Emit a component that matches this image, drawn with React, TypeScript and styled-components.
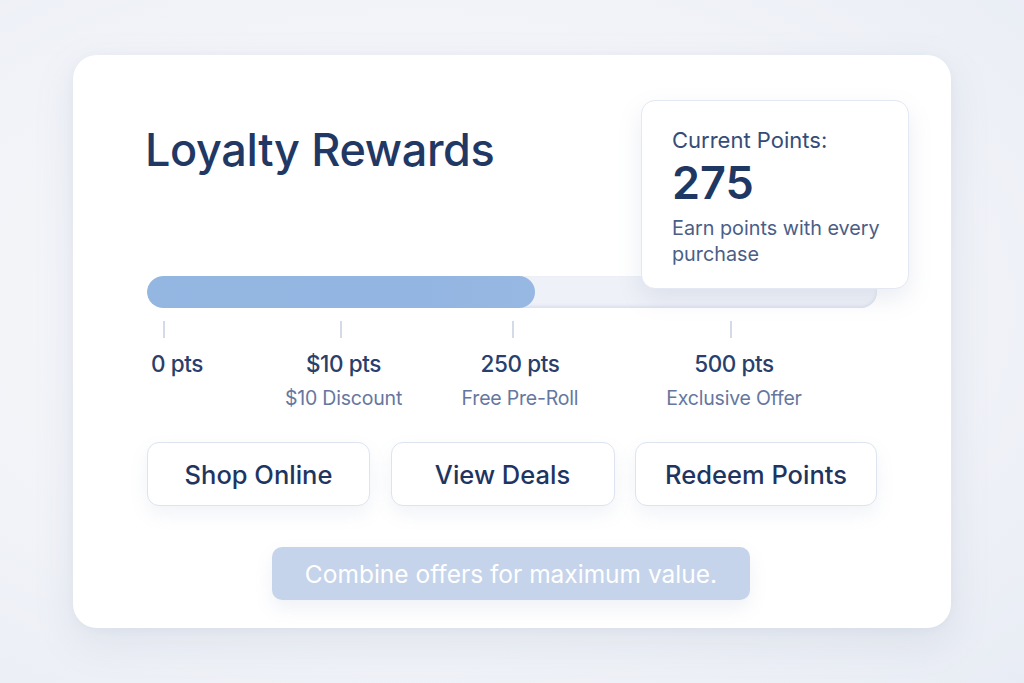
import { FC } from 'react'
import styled, { createGlobalStyle } from 'styled-components'

const GlobalStyle = createGlobalStyle`
  html, body {
    margin: 0;
    padding: 0;
  }
  body {
    font-family: Inter, "Noto Sans", "Liberation Sans", sans-serif;
    background: #f1f3f8;
  }
`

interface IMilestone {
  points: string
  reward?: string
  first?: boolean
  tickShift: number
}

const milestones: IMilestone[] = [
  { points: '0 pts', first: true, tickShift: 12 },
  { points: '$10 pts', reward: '$10 Discount', tickShift: -6 },
  { points: '250 pts', reward: 'Free Pre-Roll', tickShift: -14 },
  { points: '500 pts', reward: 'Exclusive Offer', tickShift: -6 },
]

const actions = ['Shop Online', 'View Deals', 'Redeem Points']

const progress = 388 / 730

const App: FC = () => {
  return (
    <>
      <GlobalStyle />
      <Page>
        <Card>
          <Title>Loyalty Rewards</Title>

          <PointsCard>
            <PointsLabel>Current Points:</PointsLabel>
            <PointsValue>275</PointsValue>
            <PointsHint>Earn points with every purchase</PointsHint>
          </PointsCard>

          <ProgressTrack>
            <ProgressFill style={{ width: `${progress * 100}%` }} />
          </ProgressTrack>

          <Milestones>
            {milestones.map((m) => (
              <Milestone key={m.points} $first={m.first}>
                <Tick $shift={m.tickShift} />
                <MilestonePoints>{m.points}</MilestonePoints>
                {m.reward && <MilestoneReward>{m.reward}</MilestoneReward>}
              </Milestone>
            ))}
          </Milestones>

          <Actions>
            {actions.map((a) => (
              <ActionButton key={a}>{a}</ActionButton>
            ))}
          </Actions>

          <TipWrap>
            <Tip>Combine offers for maximum value.</Tip>
          </TipWrap>
        </Card>
      </Page>
    </>
  )
}

export default App

const Page = styled.div`
  width: 1024px;
  height: 683px;
  box-sizing: border-box;
  padding: 55px 73px;
  background: radial-gradient(
    ellipse at 40% 45%,
    #f7f8fb 0%,
    #f1f3f8 60%,
    #e8ecf4 100%
  );
  overflow: hidden;
`
const Card = styled.div`
  position: relative;
  box-sizing: border-box;
  width: 878px;
  height: 573px;
  background: #ffffff;
  border-radius: 24px;
  box-shadow: 0 14px 40px rgba(120, 135, 170, 0.14),
    0 2px 8px rgba(120, 135, 170, 0.06);
  padding: 68px 74px 28px;
  display: flex;
  flex-direction: column;
`
const Title = styled.h1`
  margin: 0 0 0 -2px;
  font-size: 45px;
  line-height: 53px;
  font-weight: 500;
  color: #213865;
  letter-spacing: -0.35px;
`
const PointsCard = styled.div`
  position: absolute;
  top: 45px;
  right: 42px;
  width: 268px;
  height: 189px;
  box-sizing: border-box;
  padding: 24px 20px 0 30px;
  background: #ffffff;
  border: 1.5px solid #e3e8f2;
  border-radius: 14px;
  box-shadow: 0 10px 24px rgba(110, 128, 170, 0.14);
  display: flex;
  flex-direction: column;
  z-index: 2;
`
const PointsLabel = styled.div`
  font-size: 22px;
  line-height: 30px;
  color: #364c77;
`
const PointsValue = styled.div`
  font-size: 45px;
  line-height: 52px;
  font-weight: 600;
  color: #1f3763;
  margin-top: 2px;
`
const PointsHint = styled.div`
  font-size: 19.8px;
  line-height: 26px;
  color: #4a5e86;
  margin-top: 6px;
`
const ProgressTrack = styled.div`
  margin-top: 100px;
  height: 33px;
  border-radius: 17px;
  background: #eef1f7;
  box-shadow: inset 0 -2px 3px rgba(170, 185, 215, 0.3);
  overflow: hidden;
`
const ProgressFill = styled.div`
  height: 100%;
  border-radius: 17px;
  background: linear-gradient(90deg, #94b7e2 0%, #93b5e1 70%, #97b8e2 100%);
`
const Milestones = styled.div`
  display: grid;
  grid-template-columns: 110px 173px 180px 248px;
  margin-top: 13px;
`
const Milestone = styled.div<{ $first?: boolean }>`
  display: flex;
  flex-direction: column;
  align-items: ${(p) => (p.$first ? 'flex-start' : 'center')};
  padding-left: ${(p) => (p.$first ? '4px' : '0')};
`
const Tick = styled.div<{ $shift: number }>`
  width: 2px;
  height: 17px;
  background: #d3dbe9;
  margin-left: ${(p) => p.$shift}px;
`
const MilestonePoints = styled.div`
  margin-top: 13px;
  font-size: 22.5px;
  line-height: 26px;
  font-weight: 500;
  color: #2a3f6b;
  letter-spacing: -0.4px;
`
const MilestoneReward = styled.div`
  margin-top: 9px;
  font-size: 19.5px;
  line-height: 24px;
  color: #6577a0;
  letter-spacing: -0.2px;
`
const Actions = styled.div`
  display: grid;
  grid-template-columns: 223px 224px 242px;
  justify-content: space-between;
  margin-top: 32px;
`
const ActionButton = styled.button`
  height: 64px;
  box-sizing: border-box;
  background: #ffffff;
  border: 1.5px solid #dde3ef;
  border-radius: 12px;
  box-shadow: 0 8px 18px rgba(120, 138, 175, 0.1);
  font-family: inherit;
  font-size: 25.5px;
  font-weight: 500;
  color: #1f3561;
  cursor: default;
`
const TipWrap = styled.div`
  display: flex;
  justify-content: center;
  margin-top: 41px;
  padding-right: 2px;
`
const Tip = styled.div`
  width: 478px;
  height: 53px;
  box-sizing: border-box;
  border-radius: 10px;
  background: #c5d4ea;
  box-shadow: 0 8px 18px rgba(120, 138, 175, 0.12);
  color: #ffffff;
  font-size: 24.5px;
  display: flex;
  align-items: center;
  justify-content: center;
`
